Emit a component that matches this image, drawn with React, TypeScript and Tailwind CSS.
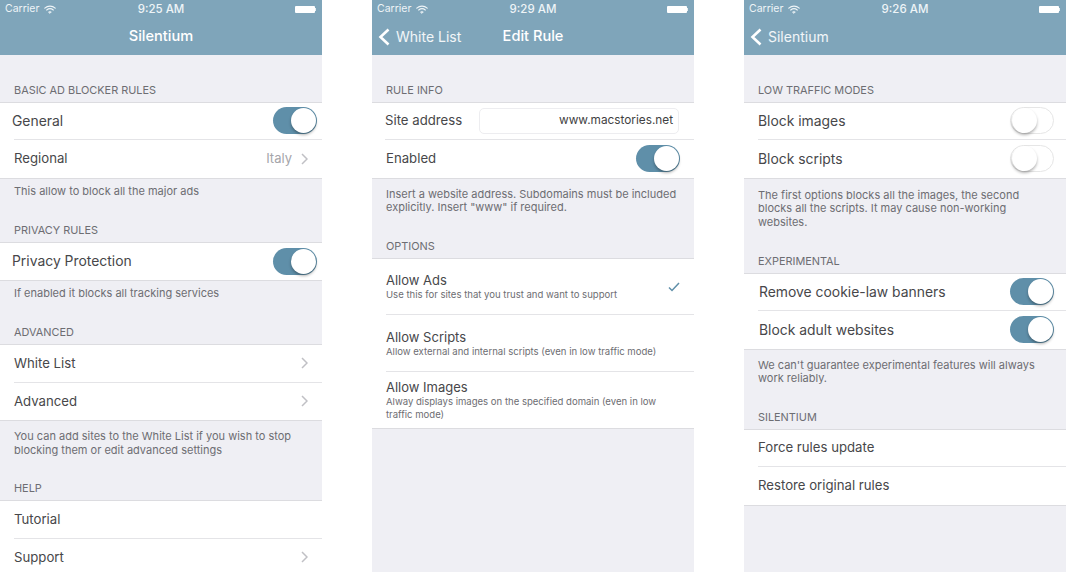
import React from 'react';

const Wifi = () => (
  <svg width="12" height="9" viewBox="0 0 12 9" className="ml-[5px]" fill="none" stroke="#eef4f7" strokeLinecap="round">
    <path d="M0.8 3.1C3.8 0.5 8.2 0.5 11.2 3.1" strokeWidth="1.2" />
    <path d="M2.7 5C4.6 3.5 7.4 3.5 9.3 5" strokeWidth="1.2" />
    <path d="M4.6 6.9C5.4 6.2 6.6 6.2 7.4 6.9L6 8.3Z" fill="#eef4f7" strokeWidth="0.6" />
  </svg>
);

const StatusBar = ({ time }: { time: string }) => (
  <div className="relative flex h-[18px] items-center px-[5px] text-[10.5px] text-[#eef4f7]">
    <span>Carrier</span>
    <Wifi />
    <span className="absolute inset-x-0 top-[1px] text-center text-[11.5px] font-medium leading-[16px]">{time}</span>
    <div className="ml-auto flex items-center pr-[1px]">
      <div className="h-[7px] w-[20px] rounded-[1px] bg-white" />
      <div className="h-[3px] w-[1px] bg-white/80" />
    </div>
  </div>
);

const Header = ({ time, title, back }: { time: string; title?: string; back?: string }) => (
  <div className="h-[55px] bg-[#7fa5ba] text-white">
    <StatusBar time={time} />
    <div className="relative flex h-[36px] items-center pl-[6px] pt-[1px]">
      {back && (
        <>
          <svg width="12" height="18" viewBox="0 0 12 18" fill="none" stroke="#fff" strokeWidth="2.6">
            <path d="M10.5 1.5L2.5 9L10.5 16.5" />
          </svg>
          <span className="ml-[6px] -mt-[1px] text-[14px] text-white/90">{back}</span>
        </>
      )}
      {title && <span className="absolute inset-x-0 text-center text-[14.6px] font-medium">{title}</span>}
    </div>
  </div>
);

const Label = ({ children, first }: { children: string; first?: boolean }) => (
  <div className={`flex items-end px-[14px] text-[10.9px] leading-[14px] text-[#6d6d72] ${first ? 'h-[47.7px] pb-[6px]' : 'h-[26px] pb-[6px]'}`}>
    {children}
  </div>
);

const Footer = ({ lines, children }: { lines: 1 | 2 | 3; children: string }) => (
  <div
    className={`px-[14px] text-[11px] leading-[13.5px] text-[#6d6d72] ${
      lines === 1 ? 'h-[39px] pt-[7px]' : lines === 2 ? 'h-[55px] pt-[10px]' : 'h-[70px] pt-[11px]'
    }`}
  >
    {children}
  </div>
);

const Group = ({ children }: { children: React.ReactNode }) => (
  <div className="bg-white shadow-[0_-1px_0_#dcdce0,0_1px_0_#dcdce0]">{children}</div>
);

const Toggle = ({ on }: { on?: boolean }) => (
  <div className={`flex h-[27px] w-[44px] shrink-0 items-center rounded-full px-[1px] ${on ? 'justify-end bg-[#5f8fa9]' : 'justify-start border border-[#e6e6e6] bg-white'}`}>
    <div className="h-[25px] w-[25px] rounded-full bg-white shadow-[0_2px_3px_rgba(0,0,0,0.3)]" />
  </div>
);

const Chevron = () => (
  <svg width="7" height="12" viewBox="0 0 7 12" fill="none" stroke="#c0c0c5" strokeWidth="1.5">
    <path d="M1 1L6 6L1 11" />
  </svg>
);

const Row = ({
  text,
  inset = 14,
  big,
  last,
  value,
  chevron,
  toggle,
  right = 5,
}: {
  text: string;
  inset?: 12 | 14 | 15;
  big?: boolean;
  last?: boolean;
  value?: string;
  chevron?: boolean;
  toggle?: 'on' | 'off';
  right?: 5 | 12 | 14;
}) => (
  <div className="pl-[14px]">
    <div
      className={`flex h-[37.5px] items-center ${last ? '' : 'border-b border-[#e4e4e7]'} ${
        right === 14 ? 'pr-[14px]' : right === 12 ? 'pr-[12px]' : 'pr-[5px]'
      }`}
    >
      <span
        className={`${big ? 'text-[13.9px]' : 'text-[13.2px]'} text-[#47474a] ${
          inset === 12 ? '-ml-[2px]' : inset === 15 ? 'ml-[1px]' : ''
        }`}
      >
        {text}
      </span>
      <div className="ml-auto flex items-center">
        {value && <span className="mr-[9px] text-[13px] text-[#a5a5aa]">{value}</span>}
        {chevron && <div className="mr-[9px]"><Chevron /></div>}
        {toggle && <Toggle on={toggle === 'on'} />}
      </div>
    </div>
  </div>
);

const Option = ({
  title,
  sub,
  check,
  last,
}: {
  title: string;
  sub: string;
  check?: boolean;
  last?: boolean;
}) => (
  <div className="pl-[14px]">
    <div className={`flex h-[56.5px] items-center pr-[14px] pt-[1px] ${last ? '' : 'border-b border-[#e4e4e7]'}`}>
      <div className="min-w-0 flex-1 pr-[20px]">
        <div className="text-[13px] leading-[16px] text-[#47474a]">{title}</div>
        <div className="text-[9.55px] leading-[13px] text-[#6d6d72]">{sub}</div>
      </div>
      {check && (
        <svg width="12" height="10" viewBox="0 0 12 10" fill="none" stroke="#5f8fa9" strokeWidth="1.5">
          <path d="M1 5.5L4 8.5L11 1" />
        </svg>
      )}
    </div>
  </div>
);

const Panel = ({ children }: { children: React.ReactNode }) => (
  <div className="h-[572px] w-[322px] overflow-hidden bg-[#efeff4]">{children}</div>
);

export default function App() {
  return (
    <div className="flex h-[572px] w-[1066px] justify-between overflow-hidden bg-white font-['Inter','Liberation_Sans',sans-serif]">
      <Panel>
        <Header time="9:25 AM" title="Silentium" />
        <Label first>BASIC AD BLOCKER RULES</Label>
        <Group>
          <Row text="General" inset={12} big toggle="on" />
          <Row text="Regional" value="Italy" chevron last />
        </Group>
        <Footer lines={1}>This allow to block all the major ads</Footer>
        <Label>PRIVACY RULES</Label>
        <Group>
          <Row text="Privacy Protection" inset={12} big toggle="on" last />
        </Group>
        <Footer lines={1}>If enabled it blocks all tracking services</Footer>
        <Label>ADVANCED</Label>
        <Group>
          <Row text="White List" chevron />
          <Row text="Advanced" chevron last />
        </Group>
        <Footer lines={2}>You can add sites to the White List if you wish to stop blocking them or edit advanced settings</Footer>
        <Label>HELP</Label>
        <Group>
          <Row text="Tutorial" />
          <Row text="Support" chevron last />
        </Group>
      </Panel>

      <Panel>
        <Header time="9:29 AM" title="Edit Rule" back="White List" />
        <Label first>RULE INFO</Label>
        <Group>
          <div className="pl-[13px]">
            <div className="flex h-[37.5px] items-center border-b border-[#e4e4e7] pr-[15px]">
              <span className="text-[13.2px] text-[#47474a]">Site address</span>
              <div className="ml-auto flex h-[26px] w-[200px] items-center justify-end rounded-[5px] border border-[#ededf0] pr-[5px] text-[11.8px] text-[#3f3f42]">
                www.macstories.net
              </div>
            </div>
          </div>
          <Row text="Enabled" toggle="on" right={14} last />
        </Group>
        <Footer lines={2}>Insert a website address. Subdomains must be included explicitly. Insert "www" if required.</Footer>
        <Label>OPTIONS</Label>
        <Group>
          <Option title="Allow Ads" sub="Use this for sites that you trust and want to support" check />
          <Option title="Allow Scripts" sub="Allow external and internal scripts (even in low traffic mode)" />
          <Option title="Allow Images" sub="Alway displays images on the specified domain (even in low traffic mode)" last />
        </Group>
      </Panel>

      <Panel>
        <Header time="9:26 AM" back="Silentium" />
        <Label first>LOW TRAFFIC MODES</Label>
        <Group>
          <Row text="Block images" big toggle="off" right={12} />
          <Row text="Block scripts" big toggle="off" right={12} last />
        </Group>
        <Footer lines={3}>The first options blocks all the images, the second blocks all the scripts. It may cause non-working websites.</Footer>
        <Label>EXPERIMENTAL</Label>
        <Group>
          <Row text="Remove cookie-law banners" inset={15} big toggle="on" right={12} />
          <Row text="Block adult websites" inset={15} big toggle="on" right={12} last />
        </Group>
        <Footer lines={2}>We can't guarantee experimental features will always work reliably.</Footer>
        <Label>SILENTIUM</Label>
        <Group>
          <Row text="Force rules update" />
          <Row text="Restore original rules" last />
        </Group>
      </Panel>
    </div>
  );
}
